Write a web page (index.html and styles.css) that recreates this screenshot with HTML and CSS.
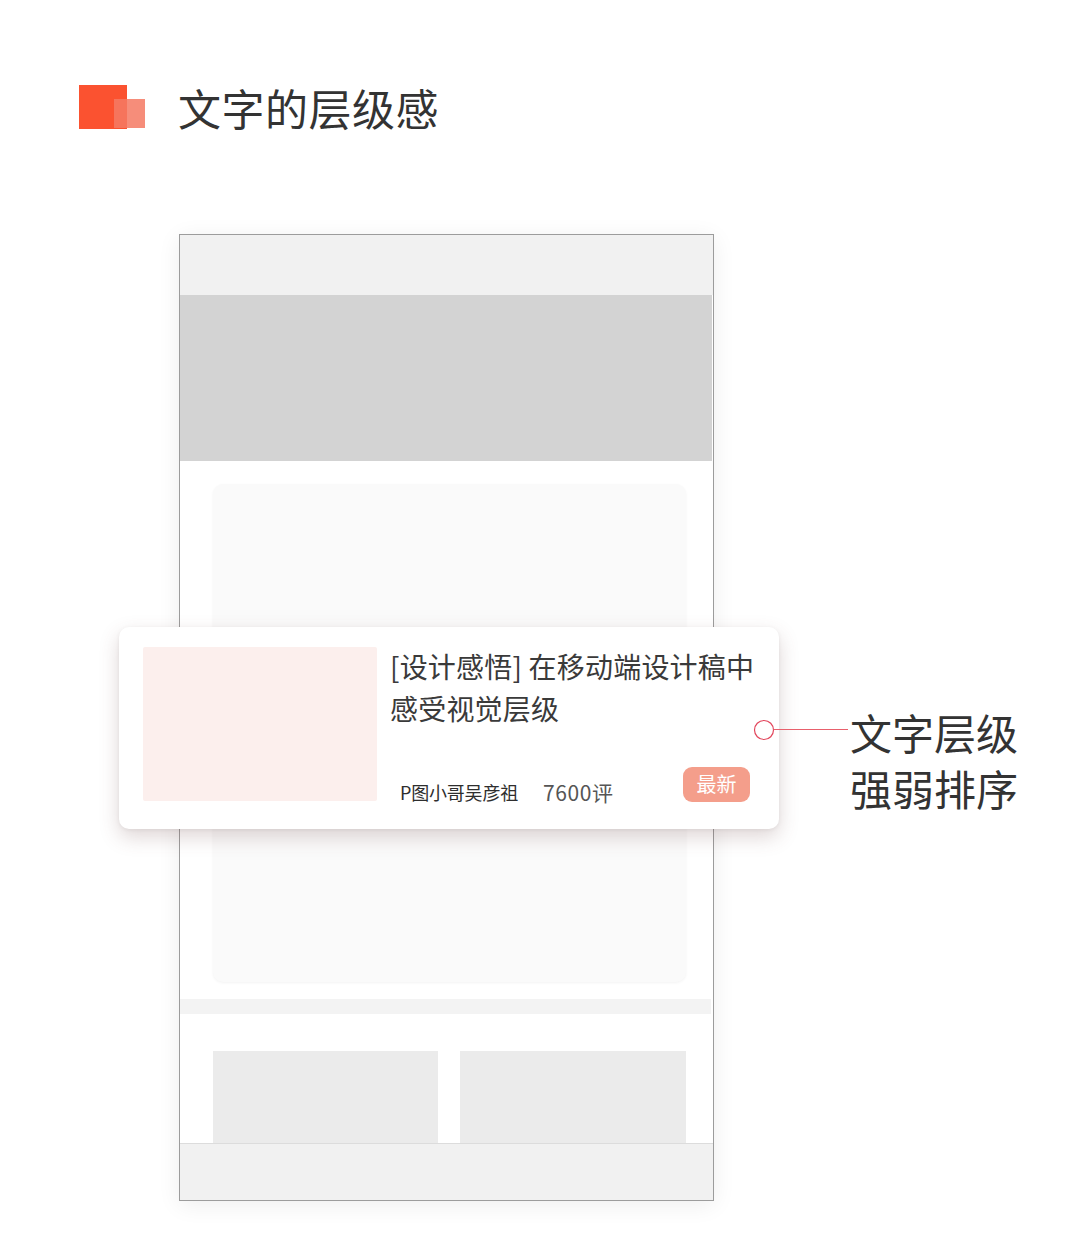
FILE: index.html
```html
<!DOCTYPE html>
<html lang="zh-CN">
<head>
<meta charset="utf-8">
<title>文字的层级感</title>
<link rel="stylesheet" href="styles.css">
</head>
<body>
<div class="page">
  <header class="header">
    <div class="logo">
      <span class="logo-big"></span>
      <span class="logo-small"></span>
    </div>
    <h1 class="title">文字的层级感</h1>
  </header>

  <div class="phone">
    <div class="topbar"></div>
    <div class="banner"></div>
    <div class="content">
      <div class="ghost-card"></div>
    </div>
    <div class="strip"></div>
    <div class="tiles">
      <div class="tile"></div>
      <div class="tile"></div>
    </div>
    <div class="bottombar"></div>
  </div>

  <div class="news-card">
    <div class="thumb"></div>
    <div class="news-body">
      <div class="news-title">[设计感悟] 在移动端设计稿中<br>感受视觉层级</div>
      <div class="news-meta">
        <span class="author">P图小哥吴彦祖</span>
        <span class="count">7600评</span>
        <span class="badge">最新</span>
      </div>
    </div>
  </div>

  <div class="callout">
    <svg class="callout-line" width="96" height="56" viewBox="0 0 96 56">
      <circle cx="11" cy="26" r="9.5" fill="#ffffff" stroke="#e2465c" stroke-width="1.2"/>
      <line x1="20.5" y1="25.5" x2="95" y2="25.5" stroke="#e8606c" stroke-width="1.2"/>
    </svg>
    <div class="callout-text">文字层级<br>强弱排序</div>
  </div>
</div>
</body>
</html>
```

FILE: styles.css
```css
* { box-sizing: border-box; }

html, body {
  margin: 0;
  padding: 0;
  background: #ffffff;
}

body {
  font-family: "Noto Sans CJK SC", "Noto Sans", "Liberation Sans", sans-serif;
  color: #333333;
}

.page {
  position: relative;
  width: 1080px;
  height: 1235px;
  overflow: hidden;
}

/* header */
.header {
  display: flex;
  align-items: center;
  height: 44px;
  margin: 85px 0 0 79px;
}

.logo {
  position: relative;
  width: 66px;
  height: 44px;
  flex: none;
}

.logo-big {
  position: absolute;
  left: 0;
  top: 0;
  width: 48px;
  height: 44px;
  background: #fb5230;
}

.logo-small {
  position: absolute;
  left: 35px;
  top: 14px;
  width: 31px;
  height: 29px;
  background: rgba(245, 122, 100, 0.86);
}

.title {
  margin: 0 0 0 33px;
  font-size: 43px;
  font-weight: 400;
  line-height: 44px;
  color: #333333;
  letter-spacing: 0.5px;
}

/* phone mockup */
.phone {
  width: 535px;
  height: 967px;
  margin: 105px 0 0 179px;
  border: 1px solid #9c9c9c;
  background: #ffffff;
  box-shadow: 0 4px 22px rgba(0, 0, 0, 0.07);
  display: flex;
  flex-direction: column;
}

.topbar {
  height: 60px;
  background: #f1f1f1;
  flex: none;
}

.banner {
  height: 166px;
  margin-right: 1px;
  background: #d3d3d3;
  flex: none;
}

.content {
  padding: 23px 27px 0 33px;
  flex: none;
}

.ghost-card {
  height: 498px;
  background: #fafafa;
  border-radius: 10px;
  box-shadow: 0 1px 3px rgba(0, 0, 0, 0.05);
}

.strip {
  height: 15px;
  margin: 17px 2px 0 0;
  background: #f3f3f3;
  flex: none;
}

.tiles {
  display: grid;
  grid-template-columns: 225px 226px;
  column-gap: 22px;
  padding: 37px 0 0 33px;
  flex: none;
}

.tile {
  height: 92px;
  background: #ebebeb;
}

.bottombar {
  flex: 1;
  background: #f1f1f1;
  border-top: 1px solid #dcdcdc;
}

/* floating news card */
.news-card {
  position: absolute;
  left: 119px;
  top: 627px;
  width: 660px;
  height: 202px;
  background: #ffffff;
  border-radius: 10px;
  box-shadow: 0 8px 20px rgba(110, 70, 70, 0.22), 0 1px 4px rgba(0, 0, 0, 0.06);
  display: flex;
  padding: 20px 28px 0 24px;
}

.thumb {
  width: 234px;
  height: 154px;
  background: #fcefed;
  border-radius: 2px;
  flex: none;
}

.news-body {
  margin-left: 13px;
  width: 360px;
  min-width: 0;
  height: 155px;
  flex: none;
  display: flex;
  flex-direction: column;
  justify-content: space-between;
}

.news-title {
  font-size: 28px;
  line-height: 42px;
  color: #3a3a3a;
  white-space: nowrap;
  margin-top: -2px;
  letter-spacing: 0.2px;
}

.news-meta {
  display: flex;
  align-items: flex-end;
}

.author {
  margin-left: 10px;
  font-size: 18px;
  line-height: 20px;
  color: #2e2e2e;
  letter-spacing: -0.2px;
}

.count {
  margin-left: 25px;
  font-size: 21px;
  line-height: 20px;
  color: #555555;
  letter-spacing: 0.6px;
}

.badge {
  margin-left: auto;
  width: 67px;
  height: 35px;
  border-radius: 9px;
  background: #f49e8b;
  color: #ffffff;
  font-size: 20px;
  line-height: 33px;
  text-align: center;
}

/* callout */
.callout {
  position: absolute;
  left: 753px;
  top: 704px;
  display: flex;
  align-items: flex-start;
}

.callout-line {
  display: block;
  flex: none;
}

.callout-text {
  font-size: 42px;
  line-height: 56px;
  color: #333333;
  margin-left: 1px;
}
```
